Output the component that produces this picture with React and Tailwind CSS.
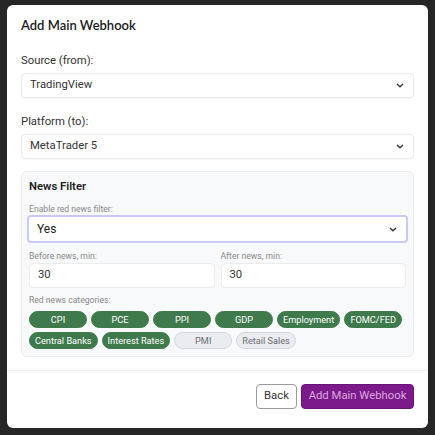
import { useState } from 'react';

const CATEGORIES = [
  { label: 'CPI', on: true },
  { label: 'PCE', on: true },
  { label: 'PPI', on: true },
  { label: 'GDP', on: true },
  { label: 'Employment', on: true },
  { label: 'FOMC/FED', on: true },
  { label: 'Central Banks', on: true },
  { label: 'Interest Rates', on: true },
  { label: 'PMI', on: false },
  { label: 'Retail Sales', on: false },
];

function Chevron() {
  return (
    <svg width="8" height="5" viewBox="0 0 8 5" className="shrink-0 mr-[1px]">
      <path d="M1 1l3 2.8L7 1" fill="none" stroke="#333" strokeWidth="1.3" />
    </svg>
  );
}

function SelectBox({ value, className = '' }) {
  return (
    <div className={`flex items-center justify-between bg-white rounded px-2 ${className}`}>
      <span>{value}</span>
      <Chevron />
    </div>
  );
}

export default function App() {
  const [cats, setCats] = useState(CATEGORIES);

  function toggle(i) {
    setCats(cats.map((c, j) => (j === i ? { ...c, on: !c.on } : c)));
  }

  return (
    <div className="w-[435px] h-[435px] bg-[#262626] pt-[5px] pl-[7px]" style={{ fontFamily: 'Roboto, "Noto Sans", sans-serif' }}>
      <div className="w-[421px] h-[423px] bg-white rounded-md flex flex-col">
        {/* Header + body */}
        <div className="px-[14px] pt-[9px]">
          <h1 className="h-[22px] leading-[22px] text-[13px] font-semibold text-[#1a1a1a]" style={{ fontFamily: 'Lato, "Open Sans", sans-serif' }}>
            Add Main Webhook
          </h1>

          <div className="mt-[16px] h-[18px] leading-[18px] text-[11.3px] text-[#333]">Source (from):</div>
          <SelectBox value="TradingView" className="mt-[3px] h-[25px] text-[11.3px] text-[#333] border border-[#ececec] shadow-[0_1px_2px_rgba(0,0,0,0.04)]" />

          <div className="mt-[15px] h-[18px] leading-[18px] text-[11.3px] text-[#333]">Platform (to):</div>
          <SelectBox value="MetaTrader 5" className="mt-[3px] h-[25px] text-[11.3px] text-[#333] border border-[#ececec] shadow-[0_1px_2px_rgba(0,0,0,0.04)]" />

          {/* News filter panel */}
          <div className="mt-[12px] h-[186px] bg-[#f8f9fa] border border-[#ececec] rounded-md px-[7px] pt-[6px]">
            <div className="h-[18px] leading-[18px] text-[11.3px] font-semibold text-[#222]">News Filter</div>
            <div className="mt-[6px] h-[14px] leading-[14px] text-[8.6px] text-[#888]">Enable red news filter:</div>
            <SelectBox value="Yes" className="mt-[-1px] -mx-[2px] h-[28px] text-[12px] text-[#222] border-[2.5px] border-[#c9c8f6]" />

            <div className="mt-[6px] grid grid-cols-2 gap-[6px]">
              <div>
                <div className="h-[14px] leading-[14px] text-[8.6px] text-[#888]">Before news, min:</div>
                <div className="h-[25px] flex items-center bg-white border border-[#ececec] rounded px-2 text-[11.3px] text-[#333]">30</div>
              </div>
              <div>
                <div className="h-[14px] leading-[14px] text-[8.6px] text-[#888]">After news, min:</div>
                <div className="h-[25px] flex items-center bg-white border border-[#ececec] rounded px-2 text-[11.3px] text-[#333]">30</div>
              </div>
            </div>

            <div className="mt-[5px] h-[14px] leading-[14px] text-[8.6px] text-[#888]">Red news categories:</div>
            <div className="mt-[4px] flex flex-wrap gap-[4px]">
              {cats.map((c, i) => (
                <button
                  key={c.label}
                  onClick={() => toggle(i)}
                  className={`h-[17px] min-w-[58px] px-[5px] rounded-full text-[9.2px] leading-none flex items-center justify-center border ${
                    c.on
                      ? 'bg-[#3f7a4c] border-[#3f7a4c] text-white'
                      : 'bg-[#eaecef] border-[#d4d6da] text-[#6b6f74]'
                  }`}
                >
                  {c.label}
                </button>
              ))}
            </div>
          </div>
        </div>

        {/* Footer */}
        <div className="mt-[13px] border-t border-[#f0f0f0] flex justify-end gap-[4px] px-[14px] pt-[13px]">
          <button className="h-[25px] w-[41px] rounded border border-[#9a9a9a] text-[11.3px] text-[#333] bg-white">Back</button>
          <button className="h-[25px] w-[113px] rounded bg-[#7c198b] border border-[#6a1478] text-[11.3px] text-[#d9a9df]">Add Main Webhook</button>
        </div>
      </div>
    </div>
  );
}
